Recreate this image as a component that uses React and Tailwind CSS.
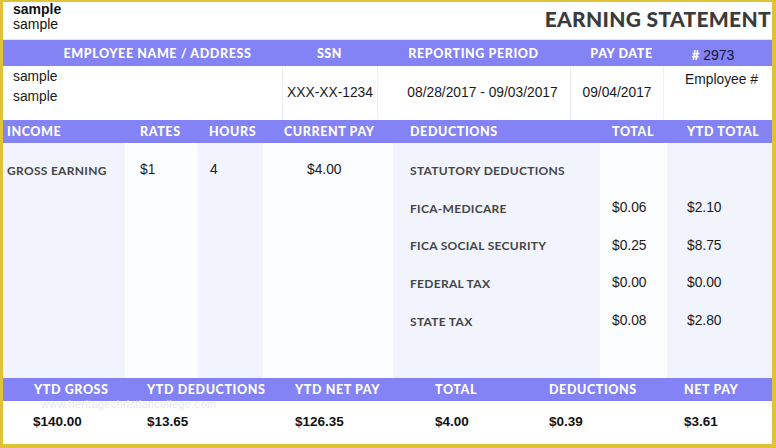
import React from "react";

const H = "font-['Lato',sans-serif] font-black text-white uppercase text-[12.5px] tracking-[0.6px]";
const L = "font-['Lato',sans-serif] font-bold text-[#454545] uppercase text-[12px] tracking-[0.3px]";
const A = "font-['Liberation_Sans',Arial,sans-serif] text-[#1a1a1a] text-[13.8px]";

const deductions = [
  ["STATUTORY DEDUCTIONS", "", ""],
  ["FICA-MEDICARE", "$0.06", "$2.10"],
  ["FICA SOCIAL SECURITY", "$0.25", "$8.75"],
  ["FEDERAL TAX", "$0.00", "$0.00"],
  ["STATE TAX", "$0.08", "$2.80"],
];

export default function App() {
  return (
    <div className="w-[776px] h-[448px] bg-[#dfc236] pl-[3px] pr-[4px] pt-[2px] pb-[4px]">
      <div className="w-full h-full bg-white flex flex-col overflow-hidden">
        {/* Top */}
        <div className="h-[38px] flex justify-between border-b border-[#e4e6f0]">
          <div className="pl-[10px] font-['Liberation_Sans',Arial,sans-serif] text-[14px] leading-[15px] text-[#111]">
            <div className="font-bold">sample</div>
            <div>sample</div>
          </div>
          <div className="pt-[4px] pr-[1px] font-['Lato',sans-serif] font-black text-[21px] leading-[26px] tracking-[0.3px] text-[#3b3b3b]">
            EARNING STATEMENT
          </div>
        </div>
        {/* Header bar 1 */}
        <div className="h-[26px] bg-[#8383f5] flex items-center pt-[2px]">
          <div className={`${H} w-[279px] pl-[30px] text-center`}>Employee Name / Address</div>
          <div className={`${H} w-[95px] text-center`}>SSN</div>
          <div className={`${H} w-[193px] text-center`}>Reporting Period</div>
          <div className={`${H} w-[93px] pl-[10px] text-center`}>Pay Date</div>
          <div className="w-[109px] pr-[9px] text-center">
            <span className="font-['Lato',sans-serif] font-black text-white text-[13px]">#</span>
            <span className="font-['Liberation_Sans',Arial,sans-serif] text-[#15153a] text-[14px]"> 2973</span>
          </div>
        </div>
        {/* Row 1 data */}
        <div className={`${A} h-[54px] flex`}>
          <div className="w-[279px] pl-[10px] pt-[1px] leading-[20px]">
            <div>sample</div>
            <div>sample</div>
          </div>
          <div className="w-[95px] border-l border-[#eeeff4] flex items-center justify-center pt-[1px]">XXX-XX-1234</div>
          <div className="w-[193px] border-l border-[#eeeff4] flex items-center justify-center pl-[17px] pt-[1px]">08/28/2017 - 09/03/2017</div>
          <div className="w-[93px] border-l border-[#eeeff4] flex items-center justify-center pt-[1px]">09/04/2017</div>
          <div className="w-[109px] border-l border-[#eeeff4] text-center pl-[7px] pt-[4px]">Employee #</div>
        </div>
        {/* Header bar 2 */}
        <div className="h-[23px] bg-[#8383f5] flex items-center pt-[1px]">
          <div className={`${H} w-[122px] pl-[4px]`}>Income</div>
          <div className={`${H} w-[73px] pl-[15px]`}>Rates</div>
          <div className={`${H} w-[65px] pl-[11px]`}>Hours</div>
          <div className={`${H} w-[130px] pl-[21px]`}>Current Pay</div>
          <div className={`${H} w-[207px] pl-[17px]`}>Deductions</div>
          <div className={`${H} w-[67px] pl-[12px]`}>Total</div>
          <div className={`${H} w-[105px] pl-[20px]`}>YTD Total</div>
        </div>
        {/* Body */}
        <div className="h-[235px] flex">
          <div className="w-[122px] bg-[#f1f4fd] pt-[9px]">
            <div className={`${L} h-[38px] flex items-center pl-[4px]`}>Gross Earning</div>
          </div>
          <div className="w-[73px] bg-[#fcfdff] pt-[9px]">
            <div className={`${A} h-[38px] flex items-center pl-[15px] pb-[2px]`}>$1</div>
          </div>
          <div className="w-[65px] bg-[#f1f4fd] pt-[9px]">
            <div className={`${A} h-[38px] flex items-center pl-[12px] pb-[2px]`}>4</div>
          </div>
          <div className="w-[130px] bg-[#fcfdff] pt-[9px]">
            <div className={`${A} h-[38px] flex items-center pl-[44px] pb-[2px]`}>$4.00</div>
          </div>
          <div className="w-[207px] bg-[#f1f4fd] pt-[9px]">
            {deductions.map((d) => (
              <div key={d[0]} className={`${L} h-[37.75px] flex items-center pl-[17px]`}>{d[0]}</div>
            ))}
          </div>
          <div className="w-[67px] bg-[#fcfdff] pt-[9px]">
            {deductions.map((d) => (
              <div key={d[0]} className={`${A} h-[37.75px] flex items-center pl-[12px] pb-[1px]`}>{d[1]}</div>
            ))}
          </div>
          <div className="w-[105px] bg-[#f1f4fd] pt-[9px]">
            {deductions.map((d) => (
              <div key={d[0]} className={`${A} h-[37.75px] flex items-center pl-[20px] pb-[1px]`}>{d[2]}</div>
            ))}
          </div>
        </div>
        {/* Footer header */}
        <div className="h-[23px] bg-[#8383f5] flex items-center pt-[1px]">
          <div className={`${H} w-[144px] pl-[31px]`}>YTD Gross</div>
          <div className={`${H} w-[148px]`}>YTD Deductions</div>
          <div className={`${H} w-[140px]`}>YTD Net Pay</div>
          <div className={`${H} w-[114px]`}>Total</div>
          <div className={`${H} w-[135px]`}>Deductions</div>
          <div className={`${H} w-[88px]`}>Net Pay</div>
        </div>
        {/* Footer values */}
        <div className="relative flex-1 flex items-center font-['Liberation_Sans',Arial,sans-serif] font-bold text-[13.5px] text-[#111]">
          <div className="absolute left-[38px] top-[-2px] text-[11px] leading-[11px] text-[#e8eaf3] font-normal font-['Liberation_Sans',Arial,sans-serif] tracking-[0.3px]">www.heritagechristiancollege.com</div>
          <div className="w-[144px] pl-[30px]">$140.00</div>
          <div className="w-[148px]">$13.65</div>
          <div className="w-[140px]">$126.35</div>
          <div className="w-[114px]">$4.00</div>
          <div className="w-[135px]">$0.39</div>
          <div className="w-[88px]">$3.61</div>
        </div>
      </div>
    </div>
  );
}
